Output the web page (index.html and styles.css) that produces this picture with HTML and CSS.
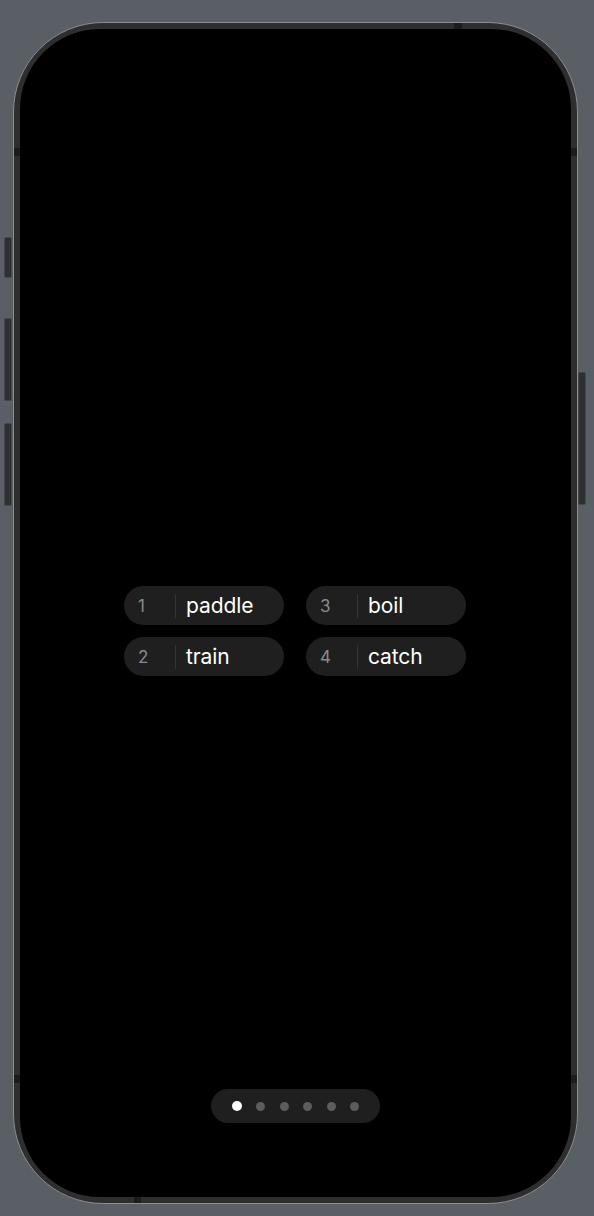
FILE: index.html
```html
<!DOCTYPE html>
<html lang="en">
<head>
<meta charset="utf-8">
<title>Recovery phrase</title>
<link rel="stylesheet" href="styles.css">
</head>
<body>
<div class="device">
  <span class="btn btn-action"></span>
  <span class="btn btn-vol-up"></span>
  <span class="btn btn-vol-down"></span>
  <span class="btn btn-power"></span>
  <div class="frame">
    <span class="band band-top"></span>
    <span class="band band-left-top"></span>
    <span class="band band-right-top"></span>
    <span class="band band-left-bottom"></span>
    <span class="band band-right-bottom"></span>
    <span class="band band-bottom"></span>
    <div class="screen">
      <div class="words">
        <div class="pill"><span class="num">1</span><span class="word">paddle</span></div>
        <div class="pill"><span class="num">2</span><span class="word">train</span></div>
        <div class="pill"><span class="num">3</span><span class="word">boil</span></div>
        <div class="pill"><span class="num">4</span><span class="word">catch</span></div>
      </div>
      <div class="pager">
        <span class="dot active"></span>
        <span class="dot"></span>
        <span class="dot"></span>
        <span class="dot"></span>
        <span class="dot"></span>
        <span class="dot"></span>
      </div>
    </div>
  </div>
</div>
</body>
</html>
```
FILE: styles.css
```css
html, body {
  margin: 0;
  padding: 0;
}
body {
  background: #5a5e65;
  width: 594px;
  height: 1216px;
  overflow: hidden;
  font-family: Inter, "Noto Sans", sans-serif;
}
.device {
  position: relative;
  margin: 22px 0 0 13px;
  width: 565px;
  height: 1182px;
}
.btn {
  position: absolute;
  width: 8px;
  background: #2f3032;
  border: 1px solid #45474b;
  box-sizing: border-box;
  border-radius: 2px;
}
.btn-action { left: -9px; top: 215px; height: 41px; }
.btn-vol-up { left: -9px; top: 296px; height: 83px; }
.btn-vol-down { left: -9px; top: 401px; height: 83px; }
.btn-power { right: -8px; top: 350px; height: 133px; }
.frame {
  position: relative;
  box-sizing: border-box;
  width: 100%;
  height: 100%;
  border-radius: 90px;
  background: #2e2e2e;
  border: 1.5px solid #8b8d90;
  padding: 6px;
  display: flex;
}
.band {
  position: absolute;
  background: #1c1c1c;
}
.band-top { top: 0; left: 440px; width: 8px; height: 6px; }
.band-bottom { bottom: 0; left: 120px; width: 7px; height: 6px; }
.band-left-top { left: 0; top: 125px; width: 6px; height: 8px; }
.band-right-top { right: 0; top: 125px; width: 6px; height: 8px; }
.band-left-bottom { left: 0; top: 1052px; width: 6px; height: 8px; }
.band-right-bottom { right: 0; top: 1052px; width: 6px; height: 8px; }
.screen {
  position: relative;
  flex: 1;
  background: #000;
  border-radius: 80px;
  display: flex;
  flex-direction: column;
  align-items: center;
}
.words {
  margin-top: 557px;
  margin-right: 1px;
  display: grid;
  grid-template-columns: 160px 160px;
  grid-template-rows: 39px 39px;
  grid-auto-flow: column;
  column-gap: 22px;
  row-gap: 12px;
}
.pill {
  display: flex;
  align-items: center;
  background: #1f1f1f;
  border-radius: 20px;
  height: 39px;
  box-sizing: border-box;
}
.num {
  width: 36px;
  margin-left: 14px;
  padding-right: 1px;
  height: 24px;
  line-height: 24px;
  border-right: 1px solid #343434;
  color: #8a8a8e;
  font-size: 17px;
}
.word {
  margin-left: 10px;
  color: #ffffff;
  font-size: 21px;
  font-weight: 400;
  letter-spacing: -0.1px;
}
.pager {
  margin-top: auto;
  margin-bottom: 74px;
  height: 34px;
  width: 169px;
  box-sizing: border-box;
  padding: 0 21px;
  border-radius: 17px;
  background: #1f1f1f;
  display: flex;
  align-items: center;
  justify-content: space-between;
}
.dot {
  width: 9px;
  height: 9px;
  border-radius: 50%;
  background: #5c5c5e;
}
.dot.active {
  width: 10px;
  height: 10px;
  background: #ffffff;
}
```
